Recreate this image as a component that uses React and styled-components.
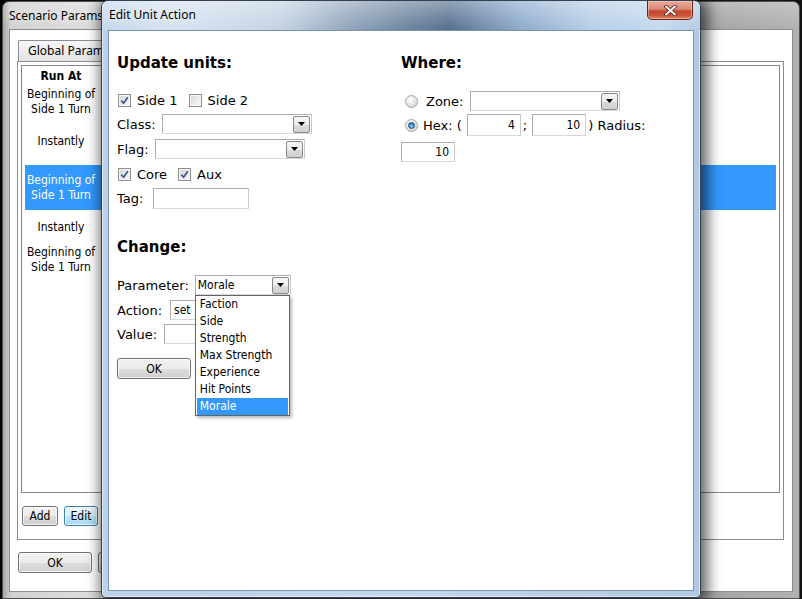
import React from 'react';
import styled, { createGlobalStyle } from 'styled-components';

const UI = `"DejaVu Sans", Verdana, sans-serif`;
const TAHOMA = `"DejaVu Sans Condensed", "DejaVu Sans", sans-serif`;
const SEGOE = `"Noto Sans", "Open Sans", sans-serif`;

const GlobalStyle = createGlobalStyle`
  html, body { margin: 0; padding: 0; background: #101010; overflow: hidden; }
  #root { width: 802px; height: 599px; }
  * { box-sizing: border-box; }
`;

const Desktop = styled.div`
  position: relative;
  width: 802px;
  height: 599px;
  overflow: hidden;
  background: linear-gradient(90deg, #050505 0, #2a2a2a 40%, #111 100%);
`;

/* ---------- background window ---------- */
const BackWindow = styled.div`
  position: absolute;
  left: 2px;
  top: 1px;
  width: 798px;
  height: 598px;
  border: 1px solid #4f4f4f;
  border-radius: 7px 7px 0 0;
  padding: 0 6px 6px 6px;
  display: flex;
  flex-direction: column;
  background:
    linear-gradient(180deg, rgba(255,255,255,0.25) 0, rgba(255,255,255,0) 26px),
    linear-gradient(90deg, #a5a5a5 0, #d2d2d2 1%, #dcdcdc 10%, #cfcfcf 40%, #a4a4a4 88%, #b2b2b2 100%);
`;

const TitleBar = styled.div`
  height: ${p => p.$h}px;
  display: flex;
  align-items: flex-start;
  flex-shrink: 0;
`;

const TitleText = styled.span`
  font: 12px/16px ${SEGOE};
  color: #000;
  margin-top: ${p => p.$mt}px;
  margin-left: ${p => p.$ml || 0}px;
  white-space: nowrap;
  text-shadow: 0 0 6px rgba(255,255,255,0.9);
`;

const BackClient = styled.div`
  flex: 1;
  background: #fff;
  border: 1px solid #8c8c8c;
  display: flex;
  flex-direction: column;
  padding: 10px 0 0 7px;
`;

const TabStrip = styled.div`
  display: flex;
  padding-left: 1px;
`;

const TabHead = styled.div`
  height: 21px;
  padding: 0 9px;
  border: 1px solid #898c95;
  border-bottom: none;
  border-radius: 2px 2px 0 0;
  background: linear-gradient(#f7f7f7, #e3e3e3);
  font: 12px/20px ${SEGOE};
  white-space: nowrap;
`;

const TabPanel = styled.div`
  width: 767px;
  height: 479px;
  border: 1px solid #898c95;
  padding: 3px;
  display: flex;
  flex-direction: column;
  flex-shrink: 0;
`;

const List = styled.div`
  height: 428px;
  border: 1px solid #828790;
  background: #fff;
  padding: 0 3px;
  display: flex;
  flex-direction: column;
`;

const ListHeader = styled.div`
  height: 20px;
  display: flex;
  align-items: center;
`;

const ListRow = styled.div`
  height: ${p => p.$h}px;
  display: flex;
  align-items: center;
  background: ${p => (p.$sel ? '#3399ff' : 'transparent')};
  color: ${p => (p.$sel ? '#fff' : '#000')};
`;

const RunAtCell = styled.div`
  width: 72px;
  text-align: center;
  font: ${p => (p.$bold ? 'bold ' : '')}12px/15px ${TAHOMA};
  font-stretch: condensed;
`;

const ButtonRow = styled.div`
  display: flex;
  gap: 6px;
  margin-top: ${p => p.$mt}px;
  padding-left: 1px;
`;

const Btn = styled.div`
  width: ${p => p.$w}px;
  height: ${p => p.$h || 20}px;
  display: flex;
  align-items: center;
  justify-content: center;
  font: 12px ${TAHOMA};
  font-stretch: condensed;
  color: #000;
  border: 1px solid ${p => (p.$hot ? '#3c7fb1' : '#707070')};
  border-radius: 3px;
  background: ${p =>
    p.$hot
      ? 'linear-gradient(#eaf6fd 0%, #d9f0fc 50%, #bee6fd 51%, #a7d9f5 100%)'
      : 'linear-gradient(#f2f2f2 0%, #ebebeb 50%, #dddddd 51%, #cfcfcf 100%)'};
  box-shadow: inset 0 0 0 1px rgba(255, 255, 255, 0.75);
  flex-shrink: 0;
`;

/* ---------- dialog ---------- */
const Dialog = styled.div`
  position: absolute;
  left: 101px;
  top: 0;
  width: 600px;
  height: 598px;
  border: 1px solid #34404e;
  border-radius: 7px 7px 5px 5px;
  padding: 0 6px 6px 6px;
  display: flex;
  flex-direction: column;
  background: linear-gradient(90deg, #bcd2ea 0, #c3d7ec 50%, #b0c8e2 100%);
  box-shadow: 3px 2px 14px 4px rgba(0, 0, 0, 0.6), inset 0 0 0 1px rgba(255,255,255,0.55);
`;

const DialogTitle = styled(TitleBar)`
  margin: 0 -6px;
  padding: 0 7px 0 7px;
  border-radius: 6px 6px 0 0;
  background:
    linear-gradient(180deg, rgba(255,255,255,0.35) 0, rgba(255,255,255,0) 28px),
    linear-gradient(90deg, #c6d8ec 0%, #d6e3f1 12%, #c4d3e3 30%, #8fa3ba 42%, #6a819c 52%, #55708f 58%, #8eaccc 70%, #b8cfe7 82%, #c5d9ee 94%, #b5cbe3 100%);
`;

const CloseBtn = styled.div`
  margin-left: auto;
  margin-top: 0;
  width: 46px;
  height: 19px;
  border: 1px solid #6b2219;
  border-top: none;
  border-radius: 0 0 5px 5px;
  display: flex;
  align-items: center;
  justify-content: center;
  background: linear-gradient(#e9a99b 0%, #d88b7a 45%, #c4462f 55%, #c9543a 80%, #de8c6a 100%);
  box-shadow: inset 0 0 0 1px rgba(255, 220, 210, 0.45);
`;

const DialogClient = styled.div`
  flex: 1;
  position: relative;
  background: #fff;
  border: 1px solid #7b93af;
  display: grid;
  grid-template-columns: 284px 1fr;
  align-content: start;
  padding: 22px 0 0 8px;
`;

const Column = styled.div`
  display: flex;
  flex-direction: column;
  align-items: flex-start;
`;

const Heading = styled.div`
  font: bold 15px/20px ${UI};
  height: 20px;
  margin-top: ${p => p.$mt || 0}px;
  color: #000;
  white-space: nowrap;
`;

const Row = styled.div`
  display: flex;
  align-items: center;
  height: ${p => p.$h || 20}px;
  margin-top: ${p => p.$mt || 0}px;
  gap: ${p => (p.$gap != null ? p.$gap : 6)}px;
  position: relative;
`;

const Label = styled.span`
  font: 13px ${UI};
  color: #000;
  white-space: nowrap;
  margin-right: ${p => p.$mr || 0}px;
`;

const CheckItem = styled.label`
  display: flex;
  align-items: center;
  gap: 6px;
  margin-right: 4px;
`;

const CheckBox = styled.span`
  width: 13px;
  height: 13px;
  margin-left: 1px;
  border: 1px solid #8e8f8f;
  display: flex;
  align-items: center;
  justify-content: center;
  background: linear-gradient(135deg, #d4d4d4 0%, #e9e9e9 50%, #fbfbfb 100%);
  box-shadow: inset 0 0 0 1px #f6f6f6;
`;

const Radio = styled.span`
  width: 13px;
  height: 13px;
  margin-left: 4px;
  margin-right: 3px;
  border-radius: 50%;
  border: 1px solid #a4a4a4;
  display: flex;
  align-items: center;
  justify-content: center;
  background: radial-gradient(circle at 40% 35%, #ffffff 0%, #e6e6e6 50%, #c9c9c9 100%);
`;

const RadioDot = styled.span`
  width: 7px;
  height: 7px;
  border-radius: 50%;
  border: 1px solid #1f4f85;
  background: radial-gradient(circle at 50% 65%, #8fe0fb 0%, #3a8cd0 55%, #1d4f8c 100%);
`;

const Combo = styled.div`
  position: relative;
  width: ${p => p.$w}px;
  height: 20px;
  border: 1px solid #abadb3;
  border-right-color: #c6c9cf;
  border-bottom-color: #d5d8dd;
  background: #fff;
  display: flex;
  align-items: center;
  justify-content: space-between;
  padding: 0 1px 0 2px;
`;

const ComboText = styled.span`
  font: 12px ${TAHOMA};
  font-stretch: condensed;
  color: #000;
`;

const ComboArrow = styled.span`
  width: 17px;
  height: 17px;
  border: 1px solid #8a8a8a;
  border-radius: 2px;
  display: flex;
  align-items: center;
  justify-content: center;
  background: linear-gradient(#f7f7f7 0%, #ececec 50%, #dcdcdc 51%, #d0d0d0 100%);
`;

const TextBox = styled.div`
  width: ${p => p.$w}px;
  height: ${p => p.$h || 20}px;
  margin-left: ${p => p.$ml || 0}px;
  border: 1px solid #abadb3;
  border-right-color: #c9ccd2;
  border-bottom-color: #d6d9de;
  background: #fff;
  display: flex;
  align-items: center;
  justify-content: ${p => (p.$right ? 'flex-end' : 'flex-start')};
  padding: 0 5px 0 3px;
  font: 12px ${TAHOMA};
  font-stretch: condensed;
  color: #000;
`;

const DropList = styled.div`
  position: absolute;
  left: -1px;
  top: 19px;
  width: 95px;
  border: 1px solid #646464;
  background: #fff;
  padding: 0 1px;
  z-index: 5;
  box-shadow: 2px 2px 3px rgba(0, 0, 0, 0.28);
`;

const DropItem = styled.div`
  height: 17px;
  padding-left: 3px;
  font: 12px/17px ${TAHOMA};
  font-stretch: condensed;
  white-space: nowrap;
  background: ${p => (p.$sel ? '#3399ff' : 'transparent')};
  color: ${p => (p.$sel ? '#fff' : '#000')};
`;

const Arrow = () => (
  <svg width="7" height="4" viewBox="0 0 7 4">
    <polygon points="0,0 7,0 3.5,4" fill="#000" />
  </svg>
);

const Check = ({ checked }) => (
  <CheckBox>
    {checked && (
      <svg width="9" height="9" viewBox="0 0 9 9">
        <path d="M1.3 4.6 L3.6 7.2 L7.8 1.2" fill="none" stroke="#3d5494" strokeWidth="1.7" />
      </svg>
    )}
  </CheckBox>
);

const CloseX = () => (
  <svg width="13" height="11" viewBox="0 0 13 11">
    <path d="M2 1.5 L11 9.5 M11 1.5 L2 9.5" stroke="#5a1e14" strokeWidth="3.6" strokeLinecap="round" />
    <path d="M2 1.5 L11 9.5 M11 1.5 L2 9.5" stroke="#fff" strokeWidth="2" strokeLinecap="round" />
  </svg>
);

const listRows = [
  { h: 31, lines: ['Beginning of', 'Side 1 Turn'] },
  { h: 48, lines: ['Instantly'] },
  { h: 45, lines: ['Beginning of', 'Side 1 Turn'], sel: true },
  { h: 34, lines: ['Instantly'] },
  { h: 31, lines: ['Beginning of', 'Side 1 Turn'] },
];

const params = ['Faction', 'Side', 'Strength', 'Max Strength', 'Experience', 'Hit Points', 'Morale'];

export default function App() {
  return (
    <>
      <GlobalStyle />
      <Desktop>
        <BackWindow>
          <TitleBar $h={27}>
            <TitleText $mt={6}>Scenario Params</TitleText>
          </TitleBar>
          <BackClient>
            <TabStrip>
              <TabHead>Global Parameters</TabHead>
            </TabStrip>
            <TabPanel>
              <List>
                <ListHeader>
                  <RunAtCell $bold>Run At</RunAtCell>
                </ListHeader>
                {listRows.map((r, i) => (
                  <ListRow key={i} $h={r.h} $sel={r.sel}>
                    <RunAtCell>
                      {r.lines.map((l, j) => (
                        <div key={j}>{l}</div>
                      ))}
                    </RunAtCell>
                  </ListRow>
                ))}
              </List>
              <ButtonRow $mt={13}>
                <Btn $w={36}>Add</Btn>
                <Btn $w={34} $hot>Edit</Btn>
                <Btn $w={60}>Delete</Btn>
              </ButtonRow>
            </TabPanel>
            <ButtonRow $mt={12}>
              <Btn $w={74} $h={21}>OK</Btn>
              <Btn $w={74} $h={21}>Cancel</Btn>
            </ButtonRow>
          </BackClient>
        </BackWindow>

        <Dialog>
          <DialogTitle $h={29}>
            <TitleText $mt={6}>Edit Unit Action</TitleText>
            <CloseBtn>
              <CloseX />
            </CloseBtn>
          </DialogTitle>
          <DialogClient>
            <Column>
              <Heading>Update units:</Heading>
              <Row $mt={17}>
                <CheckItem>
                  <Check checked />
                  <Label>Side 1</Label>
                </CheckItem>
                <CheckItem>
                  <Check />
                  <Label>Side 2</Label>
                </CheckItem>
              </Row>
              <Row $mt={4}>
                <Label>Class:</Label>
                <Combo $w={150}>
                  <ComboText />
                  <ComboArrow><Arrow /></ComboArrow>
                </Combo>
              </Row>
              <Row $mt={5}>
                <Label>Flag:</Label>
                <Combo $w={150}>
                  <ComboText />
                  <ComboArrow><Arrow /></ComboArrow>
                </Combo>
              </Row>
              <Row $mt={5}>
                <CheckItem>
                  <Check checked />
                  <Label>Core</Label>
                </CheckItem>
                <CheckItem>
                  <Check checked />
                  <Label>Aux</Label>
                </CheckItem>
              </Row>
              <Row $mt={4} $h={21} $gap={10}>
                <Label>Tag:</Label>
                <TextBox $w={96} $h={21} />
              </Row>
              <Heading $mt={28}>Change:</Heading>
              <Row $mt={18}>
                <Label>Parameter:</Label>
                <Combo $w={96}>
                  <ComboText>Morale</ComboText>
                  <ComboArrow><Arrow /></ComboArrow>
                  <DropList>
                    {params.map(p => (
                      <DropItem key={p} $sel={p === 'Morale'}>{p}</DropItem>
                    ))}
                  </DropList>
                </Combo>
              </Row>
              <Row $mt={5} $gap={8}>
                <Label>Action:</Label>
                <TextBox $w={60}>set</TextBox>
              </Row>
              <Row $mt={4} $gap={7}>
                <Label>Value:</Label>
                <TextBox $w={60} />
              </Row>
              <Row $mt={14} $h={21}>
                <Btn $w={74} $h={21}>OK</Btn>
              </Row>
            </Column>
            <Column>
              <Heading>Where:</Heading>
              <Row $mt={18} $gap={5}>
                <Radio />
                <Label $mr={2}>Zone:</Label>
                <Combo $w={150}>
                  <ComboText />
                  <ComboArrow><Arrow /></ComboArrow>
                </Combo>
              </Row>
              <Row $mt={3} $h={22} $gap={2}>
                <Radio>
                  <RadioDot />
                </Radio>
                <Label>Hex: (</Label>
                <TextBox $w={54} $h={22} $ml={3} $right>4</TextBox>
                <Label>;</Label>
                <TextBox $w={54} $h={22} $ml={3} $right>10</TextBox>
                <Label>) Radius:</Label>
              </Row>
              <Row $mt={6}>
                <TextBox $w={54} $right>10</TextBox>
              </Row>
            </Column>
          </DialogClient>
        </Dialog>
      </Desktop>
    </>
  );
}
